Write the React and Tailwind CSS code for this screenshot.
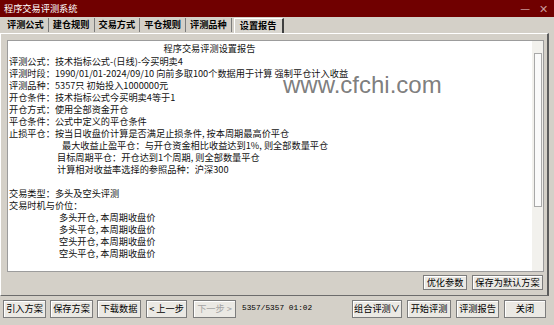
import React from 'react';

const tabs = ['评测公式', '建仓规则', '交易方式', '平仓规则', '评测品种'];

const lines = [
  { t: '评测公式：技术指标公式-(日线)-今买明卖4' },
  { t: '评测时段：1990/01/01-2024/09/10 向前多取100个数据用于计算 强制平仓计入收益' },
  { t: '评测品种：5357只 初始投入1000000元' },
  { t: '开仓条件：技术指标公式今买明卖4等于1' },
  { t: '开仓方式：使用全部资金开仓' },
  { t: '平仓条件：公式中定义的平仓条件' },
  { t: '止损平仓：按当日收盘价计算是否满足止损条件, 按本周期最高价平仓' },
  { t: '最大收益止盈平仓：与开仓资金相比收益达到1%, 则全部数量平仓', pad: 'pl-[53px]' },
  { t: '目标周期平仓：开仓达到1个周期, 则全部数量平仓', pad: 'pl-[48px]' },
  { t: '计算相对收益率选择的参照品种：沪深300', pad: 'pl-[48px]' },
  { t: '' },
  { t: '交易类型：多头及空头评测' },
  { t: '交易时机与价位：' },
  { t: '多头开仓, 本周期收盘价', pad: 'pl-[50px]' },
  { t: '多头平仓, 本周期收盘价', pad: 'pl-[50px]' },
  { t: '空头开仓, 本周期收盘价', pad: 'pl-[50px]' },
  { t: '空头平仓, 本周期收盘价', pad: 'pl-[50px]' },
];

const Btn = ({ children, className = '', disabled }) => (
  <div
    className={`flex items-center justify-center border border-[#7c7c7c] bg-[#ebe9e4] shadow-[inset_1px_1px_0_#ffffff] ${
      disabled ? 'text-[#a3a3a3]' : 'text-black'
    } ${className}`}
  >
    {children}
  </div>
);

export default function App() {
  return (
    <div className="w-[554px] h-[325px] flex flex-col bg-[#d4d0c8] text-[9.2px] text-black font-['Noto_Sans_CJK_SC',sans-serif] overflow-hidden">
      {/* title bar */}
      <div className="h-[17px] bg-[#700000] flex items-center pl-[4px] pr-[6px] text-white">
        <span>程序交易评测系统</span>
        <div className="ml-auto flex items-center gap-[9px] text-[#c99a9a] text-[11px] leading-none">
          <span>—</span>
          <span>✕</span>
        </div>
      </div>

      {/* tabs */}
      <div className="h-[16px] flex items-end pl-[3px]">
        {tabs.map((t) => (
          <div key={t} className="h-[14px] flex items-center px-[4px] border-r border-[#7c7c7c] font-semibold mb-[1px]">
            {t}
          </div>
        ))}
        <div className="h-[15px] flex items-center px-[5px] ml-[2px] border-l border-t border-white border-r-2 border-r-[#404040] font-semibold bg-[#d9d6cf]">
          设置报告
        </div>
      </div>

      {/* panel */}
      <div className="w-[549px] h-[263px] border-t border-l border-white border-r-2 border-r-[#5c5c5c] border-b border-b-[#6c6c6c] flex flex-col pl-[6px] pt-[6px] pr-[3px]">
        <div className="relative h-[232px] flex bg-white border border-[#9c9c9c]">
          <div className="flex-1 pl-[1px] pt-[1px] text-[#111]">
            <div className="h-[13px] leading-[12px] text-center pr-[122px]">程序交易评测设置报告</div>
            {lines.map((l, i) => (
              <div key={i} className={`h-[12px] leading-[12px] whitespace-pre ${l.pad || ''}`}>
                {l.t}
              </div>
            ))}
          </div>
          {/* scrollbar */}
          <div className="w-[11px] bg-[#f2f1ed] flex flex-col items-center pt-[12px]">
            <div className="w-[8px] h-[154px] border border-[#a8a8a8] bg-[#fafafa]" />
          </div>
          {/* watermark */}
          <div className="absolute left-[275px] top-[32px] text-[24px] leading-none font-['Liberation_Sans',sans-serif] text-[#6e6e6e]/90">
            www.cfchi.com
          </div>
        </div>
        <div className="flex justify-end gap-[5px] mt-[3px] pr-[1px]">
          <Btn className="w-[44px] h-[15px]">优化参数</Btn>
          <Btn className="w-[71px] h-[15px]">保存为默认方案</Btn>
        </div>
      </div>

      {/* bottom buttons */}
      <div className="flex items-center pl-[3px] pr-[8px] pt-[4px]">
        <Btn className="w-[43px] h-[18px]">引入方案</Btn>
        <Btn className="w-[43px] h-[18px] ml-[4px]">保存方案</Btn>
        <Btn className="w-[44px] h-[18px] ml-[4px]">下载数据</Btn>
        <Btn className="w-[41px] h-[18px] ml-[5px]">&lt; 上一步</Btn>
        <Btn className="w-[43px] h-[18px] ml-[6px]" disabled>下一步 &gt;</Btn>
        <span className="ml-[6px] font-['Liberation_Mono',monospace] text-[7.8px]">5357/5357 01:02</span>
        <div className="ml-auto flex gap-[5px]">
          <Btn className="w-[50px] h-[18px]">组合评测∨</Btn>
          <Btn className="w-[44px] h-[18px]">开始评测</Btn>
          <Btn className="w-[43px] h-[18px]">评测报告</Btn>
          <Btn className="w-[42px] h-[18px]">关闭</Btn>
        </div>
      </div>
    </div>
  );
}
